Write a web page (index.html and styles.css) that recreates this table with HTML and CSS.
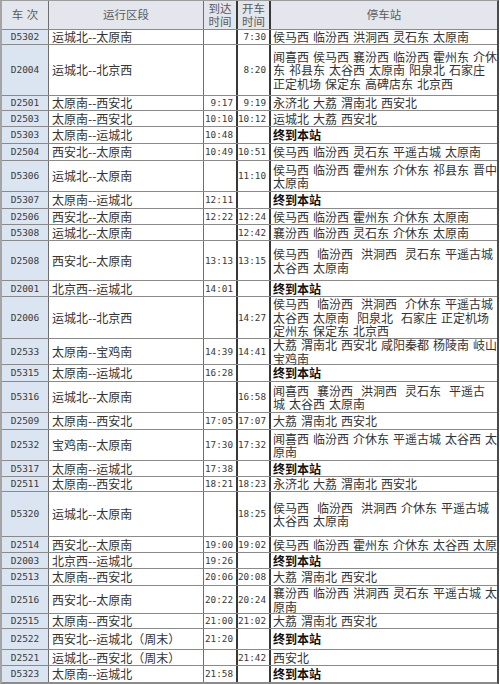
FILE: index.html
```html
<!DOCTYPE html>
<html lang="zh-CN">
<head>
<meta charset="utf-8">
<title>动车时刻表</title>
<link rel="stylesheet" href="styles.css">
</head>
<body>
<div class="sheet">
  <div class="row head h29">
    <div class="c no"><span>车 次</span></div>
    <div class="c route"><span>运行区段</span></div>
    <div class="c arr"><span>到达<br>时间</span></div>
    <div class="c dep"><span>开车<br>时间</span></div>
    <div class="c stops"><span>停车站</span></div>
  </div>
  <div class="row h15">
    <div class="c no">D5302</div><div class="c route">运城北--太原南</div><div class="c arr"></div><div class="c dep">7:30</div>
    <div class="c stops"><span>侯马西 临汾西 洪洞西 灵石东 太原南</span></div>
  </div>
  <div class="row h51">
    <div class="c no">D2004</div><div class="c route">运城北--北京西</div><div class="c arr"></div><div class="c dep">8:20</div>
    <div class="c stops"><span>闻喜西 侯马西 襄汾西 临汾西 霍州东 介休<br>东 祁县东 太谷西 太原南 阳泉北 石家庄<br>正定机场 保定东 高碑店东 北京西</span></div>
  </div>
  <div class="row h15">
    <div class="c no">D2501</div><div class="c route">太原南--西安北</div><div class="c arr">9:17</div><div class="c dep">9:19</div>
    <div class="c stops"><span>永济北 大荔 渭南北 西安北</span></div>
  </div>
  <div class="row h16">
    <div class="c no">D2503</div><div class="c route">太原南--西安北</div><div class="c arr">10:10</div><div class="c dep">10:12</div>
    <div class="c stops"><span>运城北 大荔 西安北</span></div>
  </div>
  <div class="row h17">
    <div class="c no">D5303</div><div class="c route">太原南--运城北</div><div class="c arr">10:48</div><div class="c dep"></div>
    <div class="c stops end"><span>终到本站</span></div>
  </div>
  <div class="row h17">
    <div class="c no">D2504</div><div class="c route">西安北--太原南</div><div class="c arr">10:49</div><div class="c dep">10:51</div>
    <div class="c stops"><span>侯马西 临汾西 灵石东 平遥古城 太原南</span></div>
  </div>
  <div class="row h31">
    <div class="c no">D5306</div><div class="c route">运城北--太原南</div><div class="c arr"></div><div class="c dep">11:10</div>
    <div class="c stops"><span>侯马西 临汾西 霍州东 介休东 祁县东 晋中<br>太原南</span></div>
  </div>
  <div class="row h17">
    <div class="c no">D5307</div><div class="c route">太原南--运城北</div><div class="c arr">12:11</div><div class="c dep"></div>
    <div class="c stops end"><span>终到本站</span></div>
  </div>
  <div class="row h16">
    <div class="c no">D2506</div><div class="c route">西安北--太原南</div><div class="c arr">12:22</div><div class="c dep">12:24</div>
    <div class="c stops"><span>侯马西 临汾西 霍州东 介休东 太原南</span></div>
  </div>
  <div class="row h16">
    <div class="c no">D5308</div><div class="c route">运城北--太原南</div><div class="c arr"></div><div class="c dep">12:42</div>
    <div class="c stops"><span>襄汾西 临汾西 灵石东 介休东 太原南</span></div>
  </div>
  <div class="row h40">
    <div class="c no">D2508</div><div class="c route">西安北--太原南</div><div class="c arr">13:13</div><div class="c dep">13:15</div>
    <div class="c stops"><span>侯马西  临汾西  洪洞西  灵石东 平遥古城<br>太谷西 太原南</span></div>
  </div>
  <div class="row h16">
    <div class="c no">D2001</div><div class="c route">北京西--运城北</div><div class="c arr">14:01</div><div class="c dep"></div>
    <div class="c stops end"><span>终到本站</span></div>
  </div>
  <div class="row h42">
    <div class="c no">D2006</div><div class="c route">运城北--北京西</div><div class="c arr"></div><div class="c dep">14:27</div>
    <div class="c stops"><span>侯马西  临汾西  洪洞西  介休东 平遥古城<br>太谷西 太原南  阳泉北  石家庄 正定机场<br>定州东 保定东 北京西</span></div>
  </div>
  <div class="row h26">
    <div class="c no">D2533</div><div class="c route">太原南--宝鸡南</div><div class="c arr">14:39</div><div class="c dep">14:41</div>
    <div class="c stops"><span>大荔 渭南北 西安北 咸阳秦都 杨陵南 岐山<br>宝鸡南</span></div>
  </div>
  <div class="row h17">
    <div class="c no">D5315</div><div class="c route">太原南--运城北</div><div class="c arr">16:28</div><div class="c dep"></div>
    <div class="c stops end"><span>终到本站</span></div>
  </div>
  <div class="row h31">
    <div class="c no">D5316</div><div class="c route">运城北--太原南</div><div class="c arr"></div><div class="c dep">16:58</div>
    <div class="c stops"><span>闻喜西  襄汾西  洪洞西  灵石东  平遥古<br>城 太谷西 太原南</span></div>
  </div>
  <div class="row h17">
    <div class="c no">D2509</div><div class="c route">太原南--西安北</div><div class="c arr">17:05</div><div class="c dep">17:07</div>
    <div class="c stops"><span>大荔 渭南北 西安北</span></div>
  </div>
  <div class="row h31">
    <div class="c no">D2532</div><div class="c route">宝鸡南--太原南</div><div class="c arr">17:30</div><div class="c dep">17:32</div>
    <div class="c stops"><span>闻喜西 临汾西 介休东 平遥古城 太谷西 太<br>原南</span></div>
  </div>
  <div class="row h16">
    <div class="c no">D5317</div><div class="c route">太原南--运城北</div><div class="c arr">17:38</div><div class="c dep"></div>
    <div class="c stops end"><span>终到本站</span></div>
  </div>
  <div class="row h15">
    <div class="c no">D2511</div><div class="c route">太原南--西安北</div><div class="c arr">18:21</div><div class="c dep">18:23</div>
    <div class="c stops"><span>永济北 大荔 渭南北 西安北</span></div>
  </div>
  <div class="row h45">
    <div class="c no">D5320</div><div class="c route">运城北--太原南</div><div class="c arr"></div><div class="c dep">18:25</div>
    <div class="c stops"><span>侯马西  临汾西  洪洞西 介休东 平遥古城<br>太谷西 太原南</span></div>
  </div>
  <div class="row h16">
    <div class="c no">D2514</div><div class="c route">西安北--太原南</div><div class="c arr">19:00</div><div class="c dep">19:02</div>
    <div class="c stops"><span>侯马西 临汾西 霍州东 介休东 太谷西 太原</span></div>
  </div>
  <div class="row h16">
    <div class="c no">D2003</div><div class="c route">北京西--运城北</div><div class="c arr">19:26</div><div class="c dep"></div>
    <div class="c stops end"><span>终到本站</span></div>
  </div>
  <div class="row h17">
    <div class="c no">D2513</div><div class="c route">太原南--西安北</div><div class="c arr">20:06</div><div class="c dep">20:08</div>
    <div class="c stops"><span>大荔 渭南北 西安北</span></div>
  </div>
  <div class="row h28">
    <div class="c no">D2516</div><div class="c route">西安北--太原南</div><div class="c arr">20:22</div><div class="c dep">20:24</div>
    <div class="c stops"><span>襄汾西 临汾西 洪洞西 灵石东 平遥古城 太<br>原南</span></div>
  </div>
  <div class="row h15">
    <div class="c no">D2515</div><div class="c route">太原南--西安北</div><div class="c arr">21:00</div><div class="c dep">21:02</div>
    <div class="c stops"><span>大荔 渭南北 西安北</span></div>
  </div>
  <div class="row h21">
    <div class="c no">D2522</div><div class="c route">西安北--运城北（周末）</div><div class="c arr">21:20</div><div class="c dep"></div>
    <div class="c stops end"><span>终到本站</span></div>
  </div>
  <div class="row h16">
    <div class="c no">D2521</div><div class="c route">运城北--西安北（周末）</div><div class="c arr"></div><div class="c dep">21:42</div>
    <div class="c stops"><span>西安北</span></div>
  </div>
  <div class="row h17">
    <div class="c no">D5323</div><div class="c route">太原南--运城北</div><div class="c arr">21:58</div><div class="c dep"></div>
    <div class="c stops end"><span>终到本站</span></div>
  </div>
</div>
</body>
</html>
```
FILE: styles.css
```css
html, body {
  margin: 0;
  padding: 0;
  background: #ffffff;
}

body {
  font-family: "Noto Sans CJK SC", "Noto Sans", sans-serif;
  font-size: 12px;
  color: #333333;
}

.sheet {
  width: 499px;
  box-sizing: border-box;
  border-top: 1px solid #9c9c9c;
  border-left: 2px solid #a4a4a4;
  border-right: 2px solid #4a4a4a;
  border-bottom: 1px solid #8c8c8c;
}

.row {
  display: grid;
  grid-template-columns: 47px 155px 34px 33px 226px;
  grid-template-rows: minmax(0, 1fr);
  box-sizing: border-box;
  border-bottom: 1px solid #8a8a8a;
}

.h15 { height: 15px; }
.h16 { height: 16px; }
.h17 { height: 17px; }
.h21 { height: 21px; }
.h26 { height: 26px; }
.h28 { height: 28px; }
.h29 { height: 29px; }
.h31 { height: 31px; }
.h40 { height: 40px; }
.h42 { height: 42px; }
.h45 { height: 45px; }
.h51 { height: 51px; }

.c {
  display: flex;
  align-items: center;
  min-width: 0;
  min-height: 0;
  box-sizing: border-box;
  border-right: 1px solid #6e6e6e;
  line-height: 13.5px;
  white-space: pre;
}

.c.arr,
.c.dep {
  border-right: 2px solid #383838;
  justify-content: flex-end;
  padding-right: 3px;
  font-family: "DejaVu Sans Mono", "Liberation Mono", monospace;
  font-size: 9.3px;
  color: #383838;
}

.c.no {
  justify-content: center;
  background: #dbe5f1;
  font-family: "DejaVu Sans Mono", "Liberation Mono", monospace;
  font-size: 9.5px;
  color: #3a3a3a;
}

.c.route {
  padding-left: 3px;
}

.c.stops {
  border-right: none;
  padding-left: 2px;
  word-spacing: 1.3px;
}

.c.end {
  font-weight: 700;
  color: #111111;
}

/* header row */
.head {
  background: #e3e7ed;
}

.head .c {
  justify-content: center;
  text-align: center;
  padding: 0;
  background: transparent;
  font-family: "Noto Sans CJK SC", "Noto Sans", sans-serif;
  font-size: 11.5px;
  line-height: 13.4px;
  color: #5a5a5a;
  word-spacing: 0;
}

.head .c.no span {
  word-spacing: 1px;
}
```
